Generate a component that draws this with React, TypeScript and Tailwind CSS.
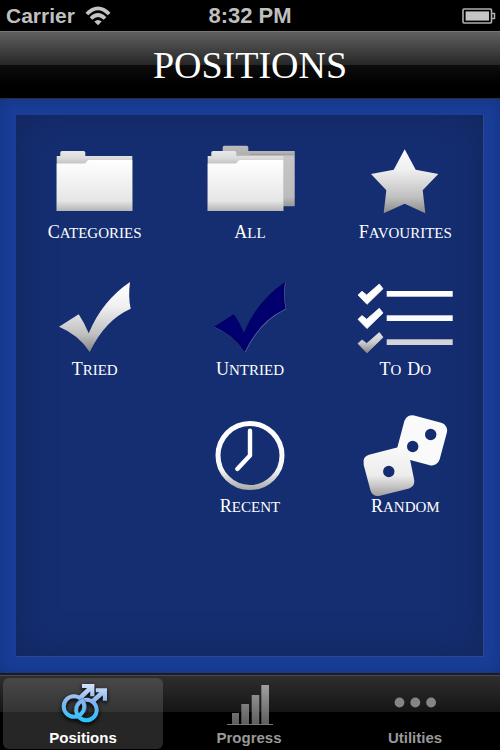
import React, { useState } from "react";

const Folder: React.FC = () => (
  <>
    <path d="M11.7 16H15.3V12.5Q15.3 11 17 11H38.6Q40.3 11 40.3 12.5V16H87.3V71H11.7Z" fill="url(#folderBack)" />
    <path d="M11.7 23.5H39Q41 23.5 41.8 21.5Q42.5 20 44 20H87.3V71H11.7Z" fill="url(#folderFront)" />
  </>
);

const CHECK = "M14 49.7L33.7 37.3Q39.5 46 43.7 56.3Q57 24 85 5Q83 20 85.7 31.7Q60 43 44.7 75Q34 58 14 49.7Z";

const CategoriesIcon = () => <Folder />;

const AllIcon = () => (
  <>
    <path d="M18.7 11H22.7V7.3Q22.7 5.7 24.3 5.7H46.7Q48.3 5.7 48.3 7.3V11H94.7V66.3H18.7Z" fill="url(#folderRear)" />
    <path d="M50 14.3H94.7" stroke="#999999" strokeWidth="1" />
    <g transform="translate(-4 0)">
      <Folder />
    </g>
  </>
);

const StarIcon = () => (
  <path
    d="M49.7 9.3L60.7 29.7L83.3 34L67.7 50.3L70.3 73.3L49.7 63.7L28.7 73.3L31.3 50.3L16 34L38.7 29.7Z"
    fill="url(#silver)"
  />
);

const TriedIcon = () => <path d={CHECK} fill="url(#silver)" />;

const UntriedIcon = () => (
  <>
    <path d={CHECK} fill="#6a6fb8" transform="translate(0.5 0.5)" />
    <path d={CHECK} fill="#01005f" />
    <path d={CHECK} fill="#01006e" transform="translate(3 3) scale(0.94)" />
  </>
);

const TodoIcon = () => (
  <>
    <path d="M3 18L7 14.3L11.7 18L24.3 7L28 11.7L12 27.3Z" fill="#ffffff" stroke="#ffffff" strokeWidth="0.8" />
    <path d="M3 42.3L7 38.6L11.7 42.3L24.3 31.3L28 36L12 51.6Z" fill="#ffffff" stroke="#ffffff" strokeWidth="0.8" />
    <path d="M3 66.6L7 62.9L11.7 66.6L24.3 55.6L28 60.3L12 75.9Z" fill="url(#todoFade)" stroke="url(#todoFade)" strokeWidth="0.8" />
    <rect x="31.7" y="14" width="66" height="5.7" fill="#ffffff" />
    <rect x="31.7" y="38.3" width="66" height="5.7" fill="#fafafa" />
    <rect x="31.7" y="62.3" width="66" height="5.7" fill="#d3d3d9" />
  </>
);

const ClockIcon = () => (
  <>
    <circle cx="50" cy="41.5" r="32" fill="none" stroke="url(#ring)" strokeWidth="5" />
    <path d="M50 16.8V41.5L37.3 55" fill="none" stroke="#ffffff" strokeWidth="4.4" strokeLinecap="round" strokeLinejoin="round" />
  </>
);

const DiceIcon = () => (
  <>
    <rect x="45" y="4.3" width="44" height="44" rx="8" fill="#fafafa" transform="rotate(15 67 26.3)" />
    <path d="M8.6 46.5Q9 42.5 14 40.8L44 33Q51 31 53.5 38L59 65Q60.5 72 54 74.5L25 81.8Q17.5 83 15.5 76.5L8.7 51Z" fill="url(#die)" />
    <circle cx="75.7" cy="20.5" r="5.7" fill="#152d70" />
    <circle cx="57.7" cy="32.5" r="5.7" fill="#152d70" />
    <circle cx="33.8" cy="57.5" r="5.7" fill="#152d70" />
  </>
);

const items = [
  { name: "Categories", icon: CategoriesIcon, place: "" },
  { name: "All", icon: AllIcon, place: "" },
  { name: "Favourites", icon: StarIcon, place: "" },
  { name: "Tried", icon: TriedIcon, place: "" },
  { name: "Untried", icon: UntriedIcon, place: "" },
  { name: "To Do", icon: TodoIcon, place: "" },
  { name: "Recent", icon: ClockIcon, place: "col-start-2" },
  { name: "Random", icon: DiceIcon, place: "" },
];

const PositionsIcon = () => (
  <svg viewBox="0 0 48 44" className="h-[44px] w-[48px] drop-shadow-[0_2px_2px_#000000]" aria-hidden="true">
    <g fill="none" stroke="url(#blueTab)">
      <circle cx="15" cy="23.5" r="10.3" strokeWidth="4" />
      <circle cx="27.4" cy="27" r="10.3" strokeWidth="4" />
      <path d="M20.5 15.5L32 4.5" strokeWidth="4.6" />
      <path d="M33.5 18.5L44 9" strokeWidth="4.6" />
    </g>
    <path d="M23 1H35.4V13.3H31.2V8.5L27.7 5H23Z" fill="url(#blueTab)" />
    <path d="M36.8 5.3H48V17.7H43.8V12.5L41 9.3H36.8Z" fill="url(#blueTab)" />
    <path d="M15.1 27.5A12.3 12.3 0 0 1 23.2 15.5" fill="none" stroke="#3d6fb0" strokeWidth="0.7" />
    <path d="M24 15A12.4 12.4 0 0 1 25.8 30" fill="none" stroke="#3d6fb0" strokeWidth="0.7" />
  </svg>
);

const ProgressIcon = () => (
  <svg viewBox="0 0 48 44" className="h-[44px] w-[48px]" aria-hidden="true">
    <g fill="url(#greyTab)">
      <rect x="7" y="30" width="7" height="11" />
      <rect x="16.3" y="21" width="7.7" height="20" />
      <rect x="26.7" y="12" width="7.6" height="29" />
      <rect x="36.3" y="2" width="7.7" height="39" />
    </g>
    <rect x="2" y="41" width="46" height="1" fill="#777777" />
  </svg>
);

const UtilitiesIcon = () => (
  <svg viewBox="0 0 48 44" className="h-[44px] w-[48px]" aria-hidden="true">
    <circle cx="8.5" cy="19.5" r="4.9" fill="#858585" />
    <circle cx="24.3" cy="19.5" r="4.9" fill="#858585" />
    <circle cx="40.1" cy="19.5" r="4.9" fill="#858585" />
  </svg>
);

const tabs = [
  { name: "Positions", icon: PositionsIcon },
  { name: "Progress", icon: ProgressIcon },
  { name: "Utilities", icon: UtilitiesIcon },
];

const Gradient: React.FC<{ id: string; y1: number; y2: number; stops: [number, string][] }> = ({ id, y1, y2, stops }) => (
  <linearGradient id={id} gradientUnits="userSpaceOnUse" x1="0" x2="0" y1={y1} y2={y2}>
    {stops.map(([offset, color]) => (
      <stop key={offset} offset={offset} stopColor={color} />
    ))}
  </linearGradient>
);

// shared by all the icons on the page
const Gradients: React.FC = () => (
  <svg className="absolute h-0 w-0" aria-hidden="true">
    <defs>
      <Gradient id="silver" y1={5} y2={75} stops={[[0, "#ffffff"], [0.35, "#f0f0f0"], [0.75, "#bfbfbf"], [1, "#858585"]]} />
      <Gradient id="folderBack" y1={11} y2={25} stops={[[0, "#e8e8e8"], [0.5, "#dcdcdc"], [1, "#bcbcbc"]]} />
      <Gradient id="folderFront" y1={20} y2={71} stops={[[0, "#ffffff"], [0.8, "#e6e6e6"], [1, "#b4b4b4"]]} />
      <Gradient id="folderRear" y1={5} y2={66} stops={[[0, "#bdbdbd"], [0.15, "#b0b0b0"], [0.2, "#c6c6c6"], [0.85, "#bcbcbc"], [1, "#999999"]]} />
      <Gradient id="todoFade" y1={55} y2={76} stops={[[0, "#e8e8e8"], [0.5, "#cccccc"], [1, "#858585"]]} />
      <Gradient id="ring" y1={7} y2={76} stops={[[0, "#ffffff"], [0.7, "#f6f6f6"], [1, "#a8a8a8"]]} />
      <Gradient id="die" y1={31} y2={82} stops={[[0, "#fafafa"], [0.6, "#ececec"], [1, "#a0a0a0"]]} />
      <Gradient id="blueTab" y1={1} y2={40} stops={[[0, "#d5e2fa"], [0.45, "#86b4ee"], [1, "#22c3fb"]]} />
      <Gradient id="greyTab" y1={2} y2={41} stops={[[0, "#a0a0a0"], [1, "#5e5e5e"]]} />
    </defs>
  </svg>
);

const StatusBar: React.FC = () => (
  <div className="grid h-[31px] grid-cols-3 items-center bg-black px-1.5 font-bold text-[#bfbfbf]">
    <div className="flex items-center gap-2.5">
      <span className="text-[21px] leading-[30px]">Carrier</span>
      <svg viewBox="0 0 26 20" className="h-[20px] w-[26px]" aria-label="Wi-Fi">
        <g fill="none" stroke="#c4c4c4" strokeWidth="3.8">
          <path d="M1.8 8Q13 -3.4 24.2 8" />
          <path d="M6 12.5Q13 5.6 20 12.5" />
        </g>
        <path d="M9.3 15.6Q13 12.3 16.7 15.6L13 19.3Z" fill="#c4c4c4" />
      </svg>
    </div>
    <span className="text-center text-[22px] leading-[30px]">8:32 PM</span>
    <svg viewBox="0 0 32 16" className="h-[16px] w-[32px] justify-self-end overflow-visible" aria-label="Battery">
      <rect x="1" y="1" width="28.5" height="14" rx="1" fill="none" stroke="#b0b0b0" strokeWidth="1.6" />
      <rect x="3.6" y="3.4" width="23.4" height="9.2" fill="#c4c4c4" />
      <path d="M30 5.5H32.5V10.5H30" fill="none" stroke="#b0b0b0" strokeWidth="1.5" />
    </svg>
  </div>
);

const App: React.FC = () => {
  const [activeTab, setActiveTab] = useState<string>("Positions");

  return (
    <div className="flex min-h-screen flex-col bg-black font-['Liberation_Sans',Arial,sans-serif]">
      <Gradients />
      <StatusBar />

      <header className="flex h-[68px] items-center justify-center border-t border-b border-t-[#777777] border-b-[#2a2e38] bg-[linear-gradient(#606060_0%,#262626_50%,#0d0d0d_50%,#000000_80%)]">
        <h1 className="font-['Liberation_Serif',serif] text-[38px] leading-[48px] text-white uppercase">Positions</h1>
      </header>

      <main className="flex flex-1 flex-col bg-[#1a3e99] p-4 shadow-[inset_0_0_16px_#14337f]">
        <div className="grid flex-1 auto-rows-min grid-cols-3 gap-y-[34px] border-r border-b border-[#2d4789] bg-[#152e71] pt-[25px] pl-px shadow-[inset_0_0_36px_#13265c]">
          {items.map(({ name, icon: Icon, place }) => (
            <button key={name} type="button" className={`flex flex-col items-center ${place}`}>
              <svg viewBox="0 0 100 82" className="h-[82px] w-[100px]" aria-hidden="true">
                <Icon />
              </svg>
              <span className="flex items-baseline gap-1.5 font-['Liberation_Serif',serif] text-[15px] leading-[20px] text-white uppercase">
                {name.split(" ").map((word) => (
                  <span key={word} className="block first-letter:text-[18px]">
                    {word}
                  </span>
                ))}
              </span>
            </button>
          ))}
        </div>
      </main>

      <nav className="grid h-[77px] grid-cols-3 border-t-2 border-[#1a1c22] bg-[linear-gradient(#4a4a4a_0,#4a4a4a_1px,#2e2e2e_1px,#151515_37px,#000000_37px)] pt-[3px] pr-0.5 pb-1">
        {tabs.map(({ name, icon: Icon }) => (
          <button
            key={name}
            type="button"
            aria-current={activeTab === name ? "page" : undefined}
            onClick={() => setActiveTab(name)}
            className={`mx-[3px] flex flex-col items-center rounded-md pt-[5px] text-[15px] leading-[22px] font-bold ${
              activeTab === name
                ? "bg-[linear-gradient(#484848_0,#343434_34px,#262626_34px)] text-white"
                : "text-[#999999]"
            }`}
          >
            <Icon />
            {name}
          </button>
        ))}
      </nav>
    </div>
  );
};

export default App;
